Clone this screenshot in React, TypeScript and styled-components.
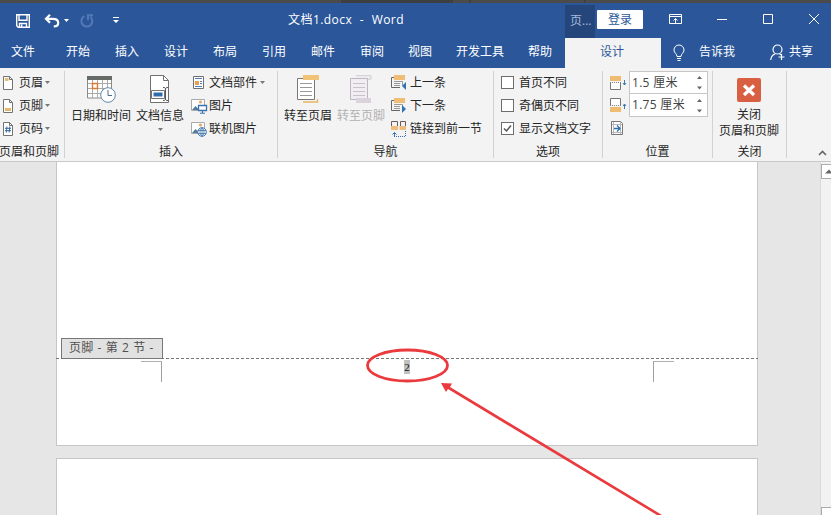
import React from "react";
import styled, { createGlobalStyle } from "styled-components";

const Global = createGlobalStyle`
  * { box-sizing: border-box; }
  html, body { margin: 0; overflow: hidden; }
  body { font: 12px/16px "Open Sans", "Noto Sans CJK SC", sans-serif; color: #262626; }
  svg { display: block; flex: none; overflow: visible; }
`;

const Window = styled.div`
  width: 831px;
  height: 515px;
  display: flex;
  flex-direction: column;
  overflow: hidden;
  background: #e6e6e6;
`;

const Backdrop = styled.div`
  height: 3px;
  flex: none;
  background: linear-gradient(90deg, #4b4b4b 341px, #3e3f43 341px 453px, #4b4b4b 453px 469px, #414141 469px 471px, #4b4b4b 471px 584px, #414141 584px 586px, #4b4b4b 586px);
`;

const TitleBar = styled.header`
  height: 35px;
  flex: none;
  display: grid;
  grid-template-columns: 128px 437px 30px 1fr;
  background: #2b579a;
  color: #fff;
`;

const QuickAccess = styled.div`
  display: flex;
  align-items: center;
  padding-left: 16px;
`;

const Gap = styled.span<{ $w: number }>`
  width: ${(p) => p.$w}px;
  flex: none;
`;

const DocTitle = styled.div`
  padding: 9px 0 0 160px;
  font-size: 12px;
  letter-spacing: 0.45px;
  word-spacing: 4px;
  white-space: nowrap;
`;

const ContextTitle = styled.div`
  height: 33px;
  margin-top: 2px;
  background: #25467b;
  color: #a5bbdc;
  padding: 8px 0 0 5px;
  white-space: nowrap;
`;

const WindowControls = styled.div`
  display: flex;
  align-items: flex-start;
  padding: 7px 0 0 2px;
`;

const SignIn = styled.button`
  width: 46px;
  height: 19px;
  padding: 0;
  border: 0;
  border-radius: 1px;
  background: #fff;
  color: #2b579a;
  font: inherit;
  line-height: 18px;
`;

const TabBar = styled.nav`
  height: 30px;
  flex: none;
  display: flex;
  background: #2b579a;
  color: #fff;
  line-height: 28px;
`;

const Tab = styled.div<{ $w: number; $pad?: number; $active?: boolean }>`
  width: ${(p) => p.$w}px;
  padding-left: ${(p) => p.$pad ?? 0}px;
  flex: none;
  white-space: nowrap;
  background: ${(p) => (p.$active ? "#f3f3f3" : "transparent")};
  color: ${(p) => (p.$active ? "#2b579a" : "#fff")};
`;

const TabIcon = styled.div<{ $w: number }>`
  width: ${(p) => p.$w}px;
  flex: none;
  padding-top: 6px;
`;

const Ribbon = styled.section`
  height: 94px;
  flex: none;
  display: grid;
  grid-template-columns: 65px 213px 216px 109px 110px 74px 1fr;
  background: #f3f3f3;
  border-bottom: 1px solid #c8c8c8;
  padding-top: 3px;
`;

const Group = styled.div`
  height: 87px;
  display: flex;
  flex-direction: column;
  border-right: 1px solid #d2d2d2;
`;

const GroupBody = styled.div`
  height: 72px;
  flex: none;
  display: flex;
`;

const GroupLabel = styled.div<{ $start?: boolean }>`
  display: flex;
  justify-content: ${(p) => (p.$start ? "flex-start" : "center")};
  margin-left: ${(p) => (p.$start ? -1 : 0)}px;
  white-space: nowrap;
  line-height: 17px;
`;

const Column = styled.div<{ $left?: number; $w?: number }>`
  margin-left: ${(p) => p.$left ?? 0}px;
  width: ${(p) => (p.$w ? p.$w + "px" : "auto")};
  flex: none;
`;

const Row = styled.div<{ $gap?: number }>`
  height: 23px;
  display: flex;
  align-items: center;
  gap: ${(p) => p.$gap ?? 3}px;
  white-space: nowrap;
`;

const BigButton = styled.div<{ $w: number; $disabled?: boolean; $top?: number }>`
  width: ${(p) => p.$w}px;
  flex: none;
  padding-top: ${(p) => p.$top ?? 4}px;
  display: flex;
  flex-direction: column;
  align-items: center;
  white-space: nowrap;
  color: ${(p) => (p.$disabled ? "#b1b1b1" : "inherit")};
`;

const BigText = styled.div`
  margin: 5px 0 4px;
  text-align: center;
  line-height: 16px;
`;

const Check = styled.span`
  width: 13px;
  height: 13px;
  flex: none;
  border: 1px solid #6d6d6d;
  background: #fff;
  margin-right: 2px;
`;

const Spinner = styled.div`
  width: 79px;
  height: 23px;
  display: flex;
  align-items: center;
  justify-content: space-between;
  padding: 0 5px 0 2px;
  border: 1px solid #c6c6c6;
  background: #fff;
  color: #444;
  letter-spacing: 0.3px;

  & + & {
    border-top-width: 0;
  }
`;

const CollapseCell = styled.div`
  display: flex;
  justify-content: flex-end;
  align-items: flex-end;
  padding: 0 4px 5px 0;
`;

const Workspace = styled.main`
  flex: 1;
  display: grid;
  grid-template-columns: 56px 702px 1fr 11px;
  position: relative;
  min-height: 0;
`;

const Pages = styled.div`
  grid-column: 2;
  display: flex;
  flex-direction: column;
  gap: 12px;
`;

const Page = styled.article<{ $first?: boolean }>`
  height: ${(p) => (p.$first ? 284 : 57)}px;
  flex: none;
  background: #fff;
  border: 1px solid #c6c6c6;
  border-top-width: ${(p) => (p.$first ? 0 : 1)}px;
  border-bottom-width: ${(p) => (p.$first ? 1 : 0)}px;
  padding-top: ${(p) => (p.$first ? 176 : 0)}px;
`;

const FooterTag = styled.div`
  width: 102px;
  height: 21px;
  margin-left: 4px;
  border: 1px solid #777;
  background: #e1e1e1;
  color: #505050;
  padding-left: 7px;
  line-height: 18px;
  letter-spacing: 0.3px;
  word-spacing: 0.6px;
  white-space: nowrap;
`;

const FooterLine = styled.div`
  height: 1px;
  margin: -1px -1px 0;
  background: repeating-linear-gradient(90deg, #777 0 3px, transparent 3px 5px);
`;

const FooterArea = styled.div`
  display: flex;
  justify-content: space-between;
  padding: 2px 83px 0 84px;
`;

const Corner = styled.i<{ $right?: boolean }>`
  width: 21px;
  height: 21px;
  border-top: 1px solid #b0b0b0;
  border-right: ${(p) => (p.$right ? 0 : 1)}px solid #a0a0a0;
  border-left: ${(p) => (p.$right ? 1 : 0)}px solid #a0a0a0;
`;

const PageNumber = styled.span`
  width: 6px;
  height: 14px;
  margin: -1px 1px 0 0;
  background: #c0c0c0;
  color: #111;
  font: 11px/14px "Liberation Serif", serif;
  text-align: center;
`;

const Scrollbar = styled.aside`
  grid-column: 4;
  background: #f2f2f2;
  border-left: 1px solid #dadada;
  padding-top: 2px;
  display: flex;
  flex-direction: column;
  justify-content: space-between;
`;

const ScrollButton = styled.div<{ $thumb?: boolean }>`
  width: 16px;
  height: ${(p) => (p.$thumb ? 8 : 15)}px;
  border: 1px solid #ababab;
  border-bottom-width: ${(p) => (p.$thumb ? 0 : 1)}px;
  background: #fff;
  padding: 4px 0 0 3px;
`;

const Annotation = styled.svg`
  position: absolute;
  left: 0;
  top: 0;
  pointer-events: none;
`;

const Caret = ({ color = "#777" }: { color?: string }) => (
  <svg width="5" height="3"><path d="M0 0h5L2.5 3z" fill={color} /></svg>
);

const SheetIcon = ({ kind }: { kind: "header" | "footer" | "number" }) => (
  <svg width="13" height="14" fill="none">
    <path d="M1.5 .5h6l3 3v10h-9z" fill="#fff" stroke="#737373" />
    <path d="M7.5 .5v3h3" stroke="#737373" />
    {kind === "header" && <path d="M3 2h3.5v3H3z" fill="#e9bd70" />}
    {kind === "footer" && <path d="M3 9h6v3H3z" fill="#e4b867" />}
    {kind === "number" && <path d="M5 4.5l-.7 6M7.8 4.5l-.7 6M3 6.3h6M3 8.7h6" stroke="#37699f" />}
  </svg>
);

const DateIcon = () => (
  <svg width="30" height="28" fill="none">
    <path d="M1.5 3h24v20h-24z" fill="#fff" stroke="#8a8a8a" />
    <path d="M1 1h25v4H1z" fill="#666b68" />
    <path d="M6.5 5v18M11.5 5v18M16.5 5v18M21.5 5v18M2 8.5h23M2 13.5h23M2 18.5h23" stroke="#aaa" />
    <path d="M6.5 8.5h5v5h-5z" stroke="#e07932" strokeWidth="1.4" />
    <circle cx="22" cy="20" r="7.3" fill="#fff" stroke="#6388ad" />
    <path d="M22 15v5.5h4" stroke="#526e8c" />
  </svg>
);

const DocInfoIcon = () => (
  <svg width="24" height="28" fill="none">
    <path d="M2.5 .5h13l5 5v22h-18z" fill="#fff" stroke="#707070" />
    <path d="M15.5 .5v5h5" stroke="#707070" />
    <path d="M3.5 15.5h13v8h-13z" fill="#fff" stroke="#737373" />
    <path d="M5.5 17.5h9v4h-9z" fill="#2f6daf" />
    <path d="M15 12.5c2 0 2.5 .4 2.5 1.5v10c0 1.1-.5 1.5-2.5 1.5m5-13c-2 0-2.5 .4-2.5 1.5v10c0 1.1.5 1.5 2.5 1.5" stroke="#555" />
  </svg>
);

const PartsIcon = () => (
  <svg width="15" height="15" fill="none">
    <path d="M2.5 1.5h10v12h-10z" fill="#fff" stroke="#707070" />
    <path d="M4 3.5h7M9 6.5h2M9 8.5h2M4 11.5h7" stroke="#4d80b7" />
    <path d="M4 6h4v4H4z" fill="#e8a04f" />
  </svg>
);

const PictureIcon = ({ online }: { online?: boolean }) => (
  <svg width="15" height="16" fill="none">
    <path d="M.5 1.5h13v11H.5z" fill="#fff" stroke="#aaa" />
    <path d="M1 12l3.500-4 2 2 2 2z" fill="#557a9b" />
    <circle cx="9.5" cy="4" r="1.6" fill="#eda266" />
    {online ? (
      <>
        <circle cx="11" cy="11" r="4.3" fill="#fff" stroke="#3d74ac" />
        <path d="M7 9.5h8M7 12.5h8M11 6.7v8.600M11 6.7c-2.700 3-2.700 5.600 0 8.600m0-8.600c2.700 3 2.700 5.600 0 8.600" stroke="#3d74ac" strokeWidth=".8" />
      </>
    ) : (
      <>
        <path d="M7.5 7.5h8v5h-8z" fill="#fff" stroke="#3972ac" strokeWidth="1.3" />
        <path d="M11.5 13v2M9 15.2h5" stroke="#3972ac" />
      </>
    )}
  </svg>
);

const GotoIcon = ({ footer }: { footer?: boolean }) => (
  <svg width="24" height="28" fill="none">
    {footer && <path d="M7 .7h15v3.5H7" stroke="#d3cbd6" fill="#eee" />}
    <path d="M1.5 3.5h17v21h-17z" fill={footer ? "#f2edf3" : "#fff"} stroke={footer ? "#bdb5bf" : "#777"} />
    {!footer && <path d="M7 0h16v5H7z" fill="#f0c377" />}
    <path d="M4 8.5h12M4 12.5h12M4 16.5h12M4 20.5h12" stroke={footer ? "#c9c1cc" : "#999"} />
    {footer
      ? <path d="M7 23h15v5H7z" fill="#dad3dc" />
      : <path d="M7 27h14.5v-3" stroke="#e8b764" strokeWidth="1.4" />}
  </svg>
);

const StepIcon = ({ next }: { next?: boolean }) => (
  <svg width="16" height="16" fill="none">
    <path d="M3 2.500H.5v10H9" stroke="#666" />
    <path d="M3 6.500h8.500v4M3 8.500h6M3 10.500h6" stroke="#999" />
    <path d="M3 0h11v5H3z" fill="#efbd75" />
    <path d={next ? "M11 7v8l4-4z" : "M15 7v8l-4-4z"} fill="#2e74b5" />
  </svg>
);

const LinkIcon = () => (
  <svg width="16" height="18" fill="none">
    <path d="M.5 6V1.500h6V6M9.500 6V1.500h5V6" stroke="#6d5a5a" />
    <path d="M0 6h7v4H0zM8.500 6H15v4H8.500z" fill="#eebc7c" />
    <path d="M3.5 17v-4M1.5 14.5l2-2 2 2" stroke="#2e74b5" />
    <path d="M5 16.5h10M14.5 11v6" stroke="#2e74b5" strokeDasharray="1 1" />
  </svg>
);

const EdgeIcon = ({ footer }: { footer?: boolean }) => (
  <svg width="18" height="15" fill="none">
    <path d={footer ? "M.5 7V.5h10V7" : "M.5 8v6.5h10V8"} stroke="#777" fill="#fff" />
    <path d={footer ? "M0 9h11v5H0z" : "M0 1h11v5H0z"} fill="#f0bc72" />
    <path d="M0 7.500h11" stroke="#888" strokeDasharray="1 1" />
    {footer
      ? <path d="M14.500 11V6M13 8l1.500-2L16 8" stroke="#4178ad" />
      : <path d="M14.500 5v5M13 8l1.500 2L16 8" stroke="#4178ad" />}
  </svg>
);

const AlignIcon = () => (
  <svg width="14" height="18" fill="none">
    <path d="M1.500 1.500h9l2 2v11h-11z" fill="#fff" stroke="#777" />
    <path d="M3.500 2v12M10.500 2v12M2 4.500h10M2 12.500h10" stroke="#b8b8b8" />
    <path d="M4 8.500h6M7 5.500l3 3-3 3" stroke="#2e70ad" strokeWidth="1.300" />
  </svg>
);

const Arrows = () => (
  <svg width="5" height="15"><path d="M0 4h5L2.500 1zM0 11.500h5L2.500 14.500z" fill="#666" /></svg>
);

const tabs: [string, number][] = [
  ["文件", 55], ["开始", 49], ["插入", 49], ["设计", 49], ["布局", 49], ["引用", 49],
  ["邮件", 49], ["审阅", 48], ["视图", 48], ["开发工具", 72], ["帮助", 37],
];

export default function App() {
  return (
    <>
      <Global />
      <Window>
        <Backdrop />
        <TitleBar>
          <QuickAccess>
            <svg width="14" height="14" fill="none" stroke="#fff" strokeWidth="1.4">
              <path d="M.7 .7h12.6v12.6H2.2L.7 11.8zM3 1v5.3h8V1M3.5 13V9.5h7V13M5.7 10.5V13" />
            </svg>
            <Gap $w={14} />
            <svg width="16" height="14" fill="none" stroke="#fff" strokeWidth="2.2">
              <path d="M6 .8L2 4.8l4 4M2.2 4.8H9c3.8 0 5.2 2 5.2 4.1 0 2.2-1.5 3.5-4.4 3.5" />
            </svg>
            <Gap $w={4} />
            <Caret color="#fff" />
            <Gap $w={11} />
            <svg width="14" height="14" fill="none" stroke="#5279b5" strokeWidth="2">
              <path d="M4.3 2.2A5.5 5.5 0 1 0 10.5 3M8 6V1.2h5" />
            </svg>
            <Gap $w={19} />
            <svg width="6" height="7" fill="#fff"><path d="M0 0h6v1H0zM0 3h6L3 6z" /></svg>
          </QuickAccess>
          <DocTitle>文档1.docx - Word</DocTitle>
          <ContextTitle>页...</ContextTitle>
          <WindowControls>
            <SignIn>登录</SignIn>
            <Gap $w={26} />
            <svg width="13" height="18" fill="none" stroke="#fff">
              <path d="M.5 4.5h12v9H.5zM.5 6.5h12M6.5 13V8.5M4.5 10.5l2-2 2 2" />
            </svg>
            <Gap $w={35} />
            <svg width="10" height="18" stroke="#fff"><path d="M0 9.5h10" /></svg>
            <Gap $w={36} />
            <svg width="10" height="18" fill="none" stroke="#fff"><path d="M.5 4.5h9v9h-9z" /></svg>
            <Gap $w={36} />
            <svg width="10" height="18" stroke="#fff"><path d="M0 4l10 10M10 4L0 14" /></svg>
          </WindowControls>
        </TitleBar>
        <TabBar>
          <Gap $w={11} />
          {tabs.map(([name, w], i) => <Tab key={i} $w={w}>{name}</Tab>)}
          <Tab $w={96} $pad={35} $active>设计</Tab>
          <Gap $w={12} />
          <TabIcon $w={26}>
            <svg width="12" height="17" fill="none" stroke="#fff">
              <path d="M4 12.5c0-3-3-3.3-3-6.5a5 5 0 0 1 10 0c0 3.2-3 3.5-3 6.5zM4 14.5h4M4.5 16.5h3" />
            </svg>
          </TabIcon>
          <Tab $w={71}>告诉我</Tab>
          <TabIcon $w={19}>
            <svg width="17" height="17" fill="none" stroke="#fff" strokeWidth="1.2">
              <circle cx="7.5" cy="5.5" r="4.5" />
              <path d="M.7 16c.3-3.5 2-5.3 4.600-6.300M9.500 9.700l1.500 1M11.500 10v6M8.500 13h6" />
            </svg>
          </TabIcon>
          <Tab $w={30}>共享</Tab>
        </TabBar>
        <Ribbon>
          <Group>
            <GroupBody>
              <Column $left={2}>
                <Row $gap={2}><SheetIcon kind="header" /><Gap $w={0} />页眉<Caret /></Row>
                <Row $gap={2}><SheetIcon kind="footer" /><Gap $w={0} />页脚<Caret /></Row>
                <Row $gap={2}><SheetIcon kind="number" /><Gap $w={0} />页码<Caret /></Row>
              </Column>
            </GroupBody>
            <GroupLabel $start>页眉和页脚</GroupLabel>
          </Group>
          <Group>
            <GroupBody>
              <Column $left={5} />
              <BigButton $w={62}><DateIcon /><BigText>日期和时间</BigText></BigButton>
              <BigButton $w={56}><DocInfoIcon /><BigText>文档信息</BigText><Caret /></BigButton>
              <Column $left={3}>
                <Row><PartsIcon />文档部件<Caret /></Row>
                <Row><PictureIcon />图片</Row>
                <Row><PictureIcon online />联机图片</Row>
              </Column>
            </GroupBody>
            <GroupLabel>插入</GroupLabel>
          </Group>
          <Group>
            <GroupBody>
              <Column $left={4} />
              <BigButton $w={52}><GotoIcon /><BigText>转至页眉</BigText></BigButton>
              <BigButton $w={54} $disabled><GotoIcon footer /><BigText>转至页脚</BigText></BigButton>
              <Column $left={3}>
                <Row><StepIcon />上一条</Row>
                <Row><StepIcon next />下一条</Row>
                <Row><LinkIcon />链接到前一节</Row>
              </Column>
            </GroupBody>
            <GroupLabel>导航</GroupLabel>
          </Group>
          <Group>
            <GroupBody>
              <Column $left={7}>
                <Row><Check />首页不同</Row>
                <Row><Check />奇偶页不同</Row>
                <Row>
                  <Check><svg width="11" height="11" fill="none" stroke="#555" strokeWidth="1.5"><path d="M2 5.5L4.5 8 9 2.5" /></svg></Check>
                  显示文档文字
                </Row>
              </Column>
            </GroupBody>
            <GroupLabel>选项</GroupLabel>
          </Group>
          <Group>
            <GroupBody>
              <Column $left={7} $w={19}>
                <Row><EdgeIcon /></Row>
                <Row><EdgeIcon footer /></Row>
                <Row><AlignIcon /></Row>
              </Column>
              <Column>
                <Spinner>1.5 厘米<Arrows /></Spinner>
                <Spinner>1.75 厘米<Arrows /></Spinner>
              </Column>
            </GroupBody>
            <GroupLabel>位置</GroupLabel>
          </Group>
          <Group>
            <GroupBody>
              <BigButton $w={72} $top={7}>
                <svg width="24" height="24">
                  <rect width="24" height="24" rx="2" fill="#d95f43" />
                  <path d="M7 7.5l10 9.5M17 7.5L7 17" stroke="#fff" strokeWidth="3.2" />
                </svg>
                <BigText>关闭<br />页眉和页脚</BigText>
              </BigButton>
            </GroupBody>
            <GroupLabel>关闭</GroupLabel>
          </Group>
          <CollapseCell>
            <svg width="9" height="6" fill="none" stroke="#666" strokeWidth="1.6"><path d="M1 5l3.5-3.5L8 5" /></svg>
          </CollapseCell>
        </Ribbon>
        <Workspace>
          <Pages>
            <Page $first>
              <FooterTag>页脚 - 第 2 节 -</FooterTag>
              <FooterLine />
              <FooterArea><Corner /><PageNumber>2</PageNumber><Corner $right /></FooterArea>
            </Page>
            <Page />
          </Pages>
          <Scrollbar>
            <ScrollButton><svg width="8" height="5"><path d="M0 4.5h8L4 .5z" fill="#666" /></svg></ScrollButton>
            <ScrollButton $thumb />
          </Scrollbar>
          <Annotation width="831" height="353" viewBox="0 162 831 353">
            <ellipse cx="407.5" cy="365.5" rx="40" ry="15.5" fill="none" stroke="#ea3a3d" strokeWidth="2.8" />
            <path d="M441 383l11 .5-2 3.5L662 515h-5L448 389l-2 3z" fill="#ea3a3d" />
          </Annotation>
        </Workspace>
      </Window>
    </>
  );
}
